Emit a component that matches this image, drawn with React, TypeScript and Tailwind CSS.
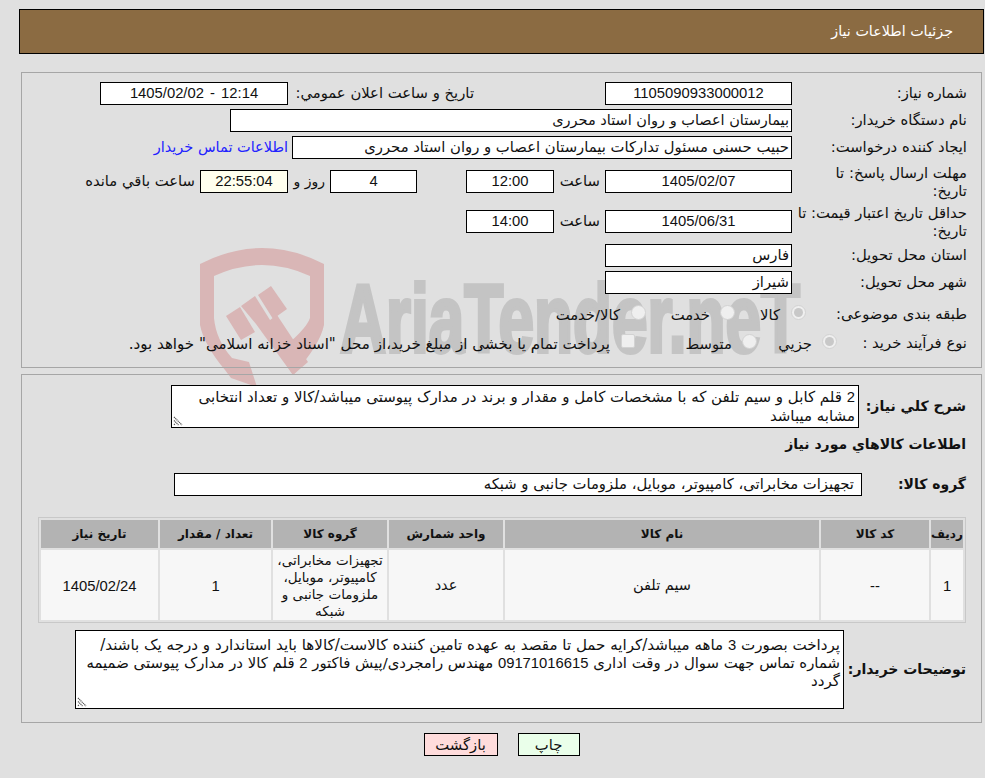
import type { ReactNode } from "react";

const ar = "font-['DejaVu_Sans',sans-serif] text-[14.8px] text-[#111]";
const num = "font-['Liberation_Sans',sans-serif] text-[14.8px] text-[#111]";

function Box({
	w,
	children,
	numeric,
	className = "",
}: {
	w: string;
	children?: ReactNode;
	numeric?: boolean;
	className?: string;
}) {
	return (
		<div
			className={`h-[23px] shrink-0 border border-black flex items-center whitespace-nowrap overflow-hidden ${
				numeric ? `justify-center ${num}` : `pr-[2px] ${ar}`
			} ${w} ${className || "bg-white"}`}
		>
			{children}
		</div>
	);
}

function Radio({ checked, className = "" }: { checked?: boolean; className?: string }) {
	return (
		<span
			className={`w-[15px] h-[15px] shrink-0 rounded-full border border-[#d2d2d2] bg-[#efefef] flex items-center justify-center ${className}`}
		>
			{checked && <span className="w-[9px] h-[9px] rounded-full bg-[#c8c8c8]" />}
		</span>
	);
}

function Grip() {
	return (
		<svg className="absolute left-[1px] bottom-[1px]" width="10" height="10" viewBox="0 0 10 10">
			<path d="M1 1l8 8M1 4.5l4.5 4.5M1 8l1 1" stroke="#555" strokeWidth="1.2" strokeDasharray="1.2 0.6" fill="none" />
		</svg>
	);
}

function Watermark() {
	return (
		<svg dir="ltr" className="absolute left-0 top-0" width="985" height="778" viewBox="0 0 985 778">
			<g fill="#d9b6b6">
				<path d="M200 264Q262 232 324 264V325Q320 345 293 375L278 352Q306 330 310 318V276Q262 254 214 276V318Q216 340 232 358L249 362L257 387L231 378L225 370Q204 345 200 325Z" />
				<path d="M226 316L240 307L255 332L241 340Z" />
				<path d="M241 306L255 296L270 320L277 315L308 362L293 375L256 324Z" />
				<path d="M258 295L271 286L287 309L273 319Z" />
			</g>
			<text
				x="340"
				y="352"
				direction="ltr"
				textAnchor="start"
				fontFamily="'Liberation Sans', sans-serif"
				fontWeight="700"
				fontSize="96"
				fill="#c4c4c4"
				stroke="#c4c4c4"
				strokeWidth="4"
				textLength="460"
				lengthAdjust="spacingAndGlyphs"
			>
				AriaTender.neT
			</text>
		</svg>
	);
}

const columns = [
	{ title: "ردیف", w: "w-[32px]" },
	{ title: "کد کالا", w: "w-[108px]" },
	{ title: "نام کالا", w: "w-[314px]" },
	{ title: "واحد شمارش", w: "w-[114px]" },
	{ title: "گروه کالا", w: "w-[114px]" },
	{ title: "تعداد / مقدار", w: "w-[111px]" },
	{ title: "تاریخ نیاز", w: "w-[117px]" },
];

export default function App() {
	return (
		<div dir="rtl" className={`relative h-[778px] w-[985px] overflow-hidden bg-[#e0e0e0] ${ar}`}>
			<Watermark />
			<div className="relative flex flex-col pt-[9px] pr-px pl-[19px]">
				<header className="h-[45px] border border-black bg-[#8b6b42] flex items-center pr-[30px] text-white text-[14.3px]">
					جزئیات اطلاعات نیاز
				</header>

				<section className="mt-[18px] mr-[2px] ml-[2px] h-[296px] border border-[#a6a6a6] pr-[14px] pt-[9px] flex flex-col">
					<div className="flex items-center h-[23px]">
						<span className="w-[175px] shrink-0">شماره نیاز:</span>
						<Box w="w-[187px]" numeric>1105090933000012</Box>
						<span className="ms-[131px] w-[181px] shrink-0 whitespace-nowrap">تاریخ و ساعت اعلان عمومي:</span>
						<Box w="w-[188px] ms-[5px] [word-spacing:2px]" numeric>12:14 - 1405/02/02</Box>
					</div>
					<div className="flex items-center h-[23px] mt-[4px]">
						<span className="w-[175px] shrink-0">نام دستگاه خریدار:</span>
						<Box w="w-[562px]"><span className="text-[14.5px]">بیمارستان اعصاب و روان استاد محرری</span></Box>
					</div>
					<div className="flex items-center h-[23px] mt-[4px]">
						<span className="w-[175px] shrink-0">ایجاد کننده درخواست:</span>
						<Box w="w-[500px]">حبیب حسنی مسئول تدارکات بیمارستان اعصاب و روان استاد محرری</Box>
						<a className="ms-[4px] text-[#2222ff] text-[14.5px] whitespace-nowrap">اطلاعات تماس خریدار</a>
					</div>
					<div className="flex items-center h-[37px] mt-[4px]">
						<span className="w-[175px] shrink-0 leading-[18px] whitespace-nowrap">
							مهلت ارسال پاسخ: تا
							<br />
							تاریخ:
						</span>
						<Box w="w-[187px]" numeric>1405/02/07</Box>
						<span className="ms-[5px] w-[46px] shrink-0">ساعت</span>
						<Box w="w-[88px]" numeric>12:00</Box>
						<Box w="w-[87px] ms-[49px]" numeric>4</Box>
						<span className="ms-[5px] w-[28px] shrink-0 whitespace-nowrap text-[14px]">روز و</span>
						<Box w="w-[88px] ms-[9px]" numeric className="bg-[#ffffee]">22:55:04</Box>
						<span className="ms-[5px] whitespace-nowrap">ساعت باقي مانده</span>
					</div>
					<div className="flex items-center h-[37px] mt-[3px]">
						<span className="w-[175px] shrink-0 leading-[18px] whitespace-nowrap">
							حداقل تاریخ اعتبار قیمت: تا
							<br />
							تاریخ:
						</span>
						<Box w="w-[187px]" numeric>1405/06/31</Box>
						<span className="ms-[5px] w-[46px] shrink-0">ساعت</span>
						<Box w="w-[88px]" numeric>14:00</Box>
					</div>
					<div className="flex items-center h-[23px] mt-[4px]">
						<span className="w-[175px] shrink-0">استان محل تحویل:</span>
						<Box w="w-[187px]">فارس</Box>
					</div>
					<div className="flex items-center h-[23px] mt-[4px]">
						<span className="w-[175px] shrink-0">شهر محل تحویل:</span>
						<Box w="w-[187px]">شیراز</Box>
					</div>
					<div className="flex items-center h-[22px] mt-[9px]">
						<span className="w-[161px] shrink-0 whitespace-nowrap">طبقه بندی موضوعی:</span>
						<Radio checked className="mb-[3px]" />
						<span className="ms-[11px] w-[22px] shrink-0 whitespace-nowrap mt-[2px]">کالا</span>
						<Radio className="ms-[23px] mb-[3px]" />
						<span className="ms-[10px] w-[40px] shrink-0 whitespace-nowrap mt-[2px]">خدمت</span>
						<Radio className="ms-[24px] mb-[3px]" />
						<span className="ms-[11px] whitespace-nowrap mt-[2px]">کالا/خدمت</span>
					</div>
					<div className="flex items-center h-[22px] mt-[7px]">
						<span className="w-[130px] shrink-0 whitespace-nowrap">نوع فرآیند خرید :</span>
						<Radio checked className="mb-[4px]" />
						<span className="ms-[10px] w-[34px] shrink-0 whitespace-nowrap mt-[3px]">جزيي</span>
						<Radio className="ms-[21px] mb-[4px]" />
						<span className="ms-[10px] w-[46px] shrink-0 whitespace-nowrap mt-[3px]">متوسط</span>
						<span className="ms-[51px] w-[14px] h-[14px] shrink-0 rounded-[2px] border border-[#d2d2d2] bg-[#efefef] mb-[4px]" />
						<span className="ms-[11px] whitespace-nowrap text-[15.1px] mt-[3px]">
							پرداخت تمام یا بخشی از مبلغ خرید،از محل "اسناد خزانه اسلامی" خواهد بود.
						</span>
					</div>
				</section>

				<section className="mt-[6px] mr-[2px] ml-[2px] h-[349px] border border-[#a6a6a6] pr-[15px] pt-[10px] flex flex-col">
					<div className="flex items-center h-[43px]">
						<span className="w-[107px] shrink-0 font-bold text-[14px] whitespace-nowrap">شرح کلي نياز:</span>
						<div className="relative h-[43px] w-[688px] shrink-0 border border-black bg-white px-[3px] text-[15px] leading-[19px] pt-[2px] whitespace-nowrap">
							<span className={num}>2</span> قلم کابل و سیم تلفن که با مشخصات کامل و مقدار و برند در مدارک پیوستی میباشد/کالا و تعداد انتخابی
							<br />
							مشابه میباشد
							<Grip />
						</div>
					</div>
					<div className="mt-[6px] h-[20px] font-bold text-[14px] flex items-center">اطلاعات کالاهاي مورد نياز</div>
					<div className="flex items-center h-[23px] mt-[19px]">
						<span className="w-[104px] shrink-0 font-bold text-[14px]">گروه کالا:</span>
						<div className="h-[23px] w-[688px] shrink-0 border border-black bg-white pr-[7px] flex items-center whitespace-nowrap">
							تجهیزات مخابراتی، کامپیوتر، موبایل، ملزومات جانبی و شبکه
						</div>
					</div>
					<table className="mt-[21px] ml-[15px] w-[928px] h-[106px] border border-[#c8c8c8] border-separate border-spacing-[2px] text-center table-fixed">
						<thead>
							<tr className="h-[28px]">
								{columns.map((c) => (
									<th key={c.title} className={`bg-[#b3b3b3] font-bold text-[12px] p-0 ${c.w}`}>
										{c.title}
									</th>
								))}
							</tr>
						</thead>
						<tbody>
							<tr>
								<td className={`bg-[#f7f7f7] p-0 pt-[2px] ${num}`}>1</td>
								<td className={`bg-[#f7f7f7] p-0 pt-[2px] ${num}`}>--</td>
								<td className="bg-[#f7f7f7] p-0 pt-[2px] text-[14.5px]">سیم تلفن</td>
								<td className="bg-[#f7f7f7] p-0 pt-[2px] text-[14.5px]">عدد</td>
								<td className="bg-[#f7f7f7] p-0 pt-[2px] text-[13.5px] leading-[17px]">
									تجهیزات مخابراتی،
									<br />
									کامپیوتر، موبایل،
									<br />
									ملزومات جانبی و
									<br />
									شبکه
								</td>
								<td className={`bg-[#f7f7f7] p-0 pt-[2px] ${num}`}>1</td>
								<td className={`bg-[#f7f7f7] p-0 pt-[2px] ${num}`}>1405/02/24</td>
							</tr>
						</tbody>
					</table>
					<div className="flex items-center h-[79px] mt-[7px]">
						<span className="w-[122px] shrink-0 font-bold text-[14px] whitespace-nowrap">توضیحات خریدار:</span>
						<div className="relative h-[79px] w-[769px] shrink-0 border border-black bg-white px-[3px] pt-[5px] text-[15.1px] leading-[18px] whitespace-nowrap">
							پرداخت بصورت <span className={num}>3</span> ماهه میباشد/کرایه حمل تا مقصد به عهده تامین کننده کالاست/کالاها باید استاندارد و درجه یک باشند/
							<br />
							<span className="text-[14.9px]">
								شماره تماس جهت سوال در وقت اداری <span className={num}>09171016615</span> مهندس رامجردی/پیش فاکتور <span className={num}>2</span> قلم کالا در مدارک پیوستی ضمیمه
							</span>
							<br />
							گردد
							<Grip />
						</div>
					</div>
				</section>

				<div className="mt-[10px] flex justify-center gap-[20px]">
					<button type="button" className="h-[23px] w-[62px] border border-black bg-[#eaffea]">چاپ</button>
					<button type="button" className="h-[23px] w-[74px] border border-black bg-[#ffdcdc]">بازگشت</button>
				</div>
			</div>
		</div>
	);
}
